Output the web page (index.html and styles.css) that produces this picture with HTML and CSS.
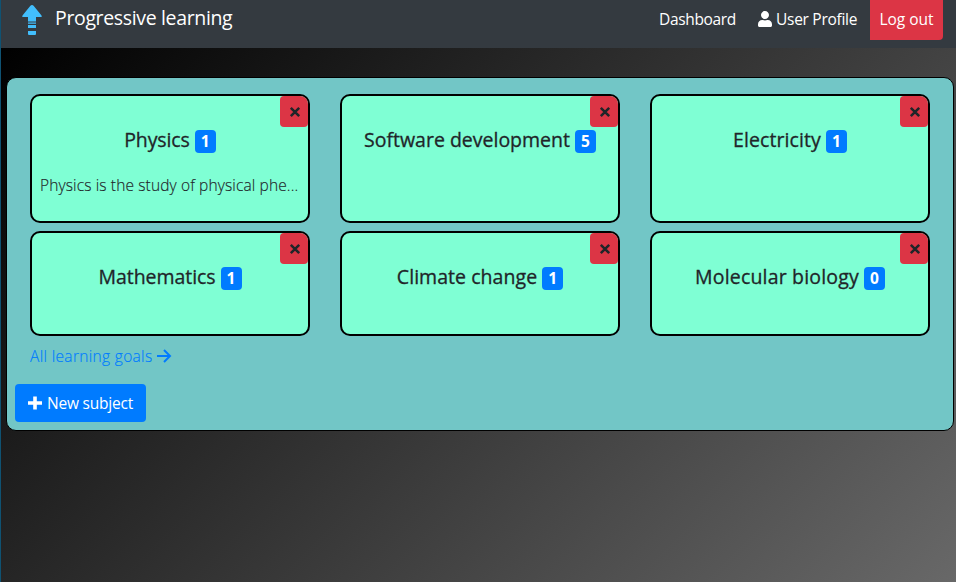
FILE: index.html
```html
<!DOCTYPE html>
<html lang="en">
<head>
<meta charset="utf-8">
<title>Progressive learning</title>
<link rel="stylesheet" href="styles.css">
</head>
<body>
<svg class="sprite" aria-hidden="true">
  <symbol id="times" viewBox="0 0 10 10"><path d="M1.500 1.500l7 7M8.500 1.500l-7 7" stroke="currentColor" stroke-width="2.100"/></symbol>
</svg>
<header class="navbar">
  <a class="brand">
    <svg class="logo" width="22" height="32" viewBox="0 0 22 32"><path d="M11 0Q12 0 12.800 1L20.500 10.500Q21.500 12 20 12H15V16.500H7V12H2Q.5 12 1.500 10.500L9.200 1Q10 0 11 0ZM7 17.500h8v1.200H7zM7 20h8v3H7zM7 26h8v3q0 1-1 1H8q-1 0-1-1z"/></svg>
    <span class="brand-name">Progressive learning</span>
  </a>
  <nav class="links">
    <a class="link dashboard">Dashboard</a>
    <a class="link profile"><svg width="14" height="16" viewBox="0 0 448 512"><path fill="currentColor" d="M224 256c70.700 0 128-57.300 128-128S294.700 0 224 0 96 57.300 96 128s57.300 128 128 128zm89.600 32h-16.700c-22.200 10.200-46.900 16-72.900 16s-50.600-5.800-72.900-16h-16.700C60.200 288 0 348.200 0 422.400V464c0 26.500 21.500 48 48 48h352c26.500 0 48-21.500 48-48v-41.600c0-74.200-60.200-134.400-134.400-134.400z"/></svg><span>User Profile</span></a>
    <button class="logout">Log out</button>
  </nav>
</header>
<main class="panel">
  <div class="grid">
    <section class="card">
      <button class="close" aria-label="Remove"><svg width="12" height="12"><use href="#times"/></svg></button>
      <h5 class="title"><span class="t-physics">Physics</span><span class="badge">1</span></h5>
      <p class="desc">Physics is the study of physical phe...</p>
    </section>
    <section class="card">
      <button class="close" aria-label="Remove"><svg width="12" height="12"><use href="#times"/></svg></button>
      <h5 class="title"><span class="t-software">Software development</span><span class="badge">5</span></h5>
    </section>
    <section class="card">
      <button class="close" aria-label="Remove"><svg width="12" height="12"><use href="#times"/></svg></button>
      <h5 class="title"><span class="t-electricity">Electricity</span><span class="badge">1</span></h5>
    </section>
    <section class="card">
      <button class="close" aria-label="Remove"><svg width="12" height="12"><use href="#times"/></svg></button>
      <h5 class="title"><span class="t-math">Mathematics</span><span class="badge">1</span></h5>
    </section>
    <section class="card">
      <button class="close" aria-label="Remove"><svg width="12" height="12"><use href="#times"/></svg></button>
      <h5 class="title"><span class="t-climate">Climate change</span><span class="badge">1</span></h5>
    </section>
    <section class="card">
      <button class="close" aria-label="Remove"><svg width="12" height="12"><use href="#times"/></svg></button>
      <h5 class="title"><span class="t-biology">Molecular biology</span><span class="badge">0</span></h5>
    </section>
  </div>
  <a class="all"><span>All learning goals</span><svg width="15" height="14" viewBox="0 0 15 14"><path d="M0 7h13M7 1l6 6-6 6" fill="none" stroke="currentColor" stroke-width="2"/></svg></a>
  <button class="new"><svg width="14" height="14" viewBox="0 0 14 14"><path d="M7 .5v13M0 7h14" stroke="currentColor" stroke-width="3.600"/></svg><span>New subject</span></button>
</main>
</body>
</html>
```

FILE: styles.css
```css
* { box-sizing: border-box; }
body {
  margin: 0;
  height: 582px;
  overflow: hidden;
  border-left: 1px solid #0f5272;
  background: linear-gradient(135deg, #000, #686868) 0 48px / 100% 534px no-repeat;
  font-family: "Open Sans", "Noto Sans", sans-serif;
  font-size: 16px;
  line-height: 24px;
  color: #212529;
}
button { font: inherit; border: 0; padding: 0; }
svg { flex: none; }
.sprite { position: absolute; width: 0; height: 0; }
.navbar {
  height: 48px;
  background: #343a40;
  color: #fff;
  display: flex;
  justify-content: space-between;
  align-items: flex-start;
  padding: 0 13px 0 20px;
  white-space: nowrap;
}
.brand { display: flex; padding-top: 5px; }
.logo { fill: #42befc; }
.brand-name { margin: 1px 0 0 12px; font-size: 19.500px; letter-spacing: -.35px; }
.links { display: flex; height: 40px; line-height: 38px; font-size: 15.500px; }
.link { display: flex; align-items: flex-start; letter-spacing: -.33px; }
.dashboard { width: 99px; }
.profile { width: 112px; gap: 4px; letter-spacing: -.28px; }
.profile svg { margin-top: 11px; }
.logout {
  width: 73px;
  padding-bottom: 2px;
  background: #dc3545;
  color: #fff;
  border-radius: 0 0 4px 0;
  letter-spacing: 0;
}
.panel {
  margin: 29px 2px 0 5px;
  height: 354px;
  border: 1px solid #000;
  border-radius: 10px;
  background: #72c6c6;
  padding: 16px 7px 0 8px;
}
.grid {
  display: grid;
  grid-template-columns: repeat(3, 280px);
  grid-template-rows: 129px 105px;
  column-gap: 30px;
  row-gap: 8px;
  margin-left: 15px;
}
.card {
  position: relative;
  border: 2px solid #000;
  border-radius: 10px;
  background: #7fffd4;
  overflow: hidden;
  padding: 32px 8px 0;
}
.close {
  position: absolute;
  top: 0;
  right: 0;
  width: 28px;
  height: 31px;
  padding-left: 1px;
  display: grid;
  place-items: center;
  background: #dc3545;
  color: #212529;
  border-radius: 4px;
}
.title {
  display: flex;
  justify-content: center;
  gap: 5px;
  margin: 0;
  font-size: 19.500px;
  font-weight: 500;
  -webkit-text-stroke: .3px currentColor;
  line-height: 24px;
  white-space: nowrap;
}
.t-physics { letter-spacing: -.1px; }
.t-software { letter-spacing: 0; }
.t-electricity { letter-spacing: .1px; }
.t-math { letter-spacing: -.05px; }
.t-climate { letter-spacing: .05px; }
.t-biology { letter-spacing: .18px; }
.badge {
  width: 21px;
  height: 23px;
  margin-top: 2px;
  border-radius: 4px;
  background: #007bff;
  color: #fff;
  font-size: 15.500px;
  font-weight: 700;
  line-height: 23px;
  text-align: center;
  -webkit-text-stroke: 0;
}
.desc {
  margin: 20px 0 0;
  font-size: 15.500px;
  font-weight: 300;
  letter-spacing: .13px;
  white-space: nowrap;
  -webkit-text-stroke: .15px currentColor;
}
.all {
  display: flex;
  align-items: center;
  gap: 4px;
  margin: 8px 0 0 15px;
  color: #007bff;
  font-size: 15.500px;
  font-weight: 300;
  letter-spacing: .33px;
  -webkit-text-stroke: .15px currentColor;
}
.new {
  display: flex;
  align-items: center;
  justify-content: center;
  gap: 5px;
  width: 131px;
  height: 38px;
  margin-top: 16px;
  border-radius: 4px;
  background: #007bff;
  color: #fff;
  font-size: 15.500px;
  letter-spacing: -.2px;
}
```
